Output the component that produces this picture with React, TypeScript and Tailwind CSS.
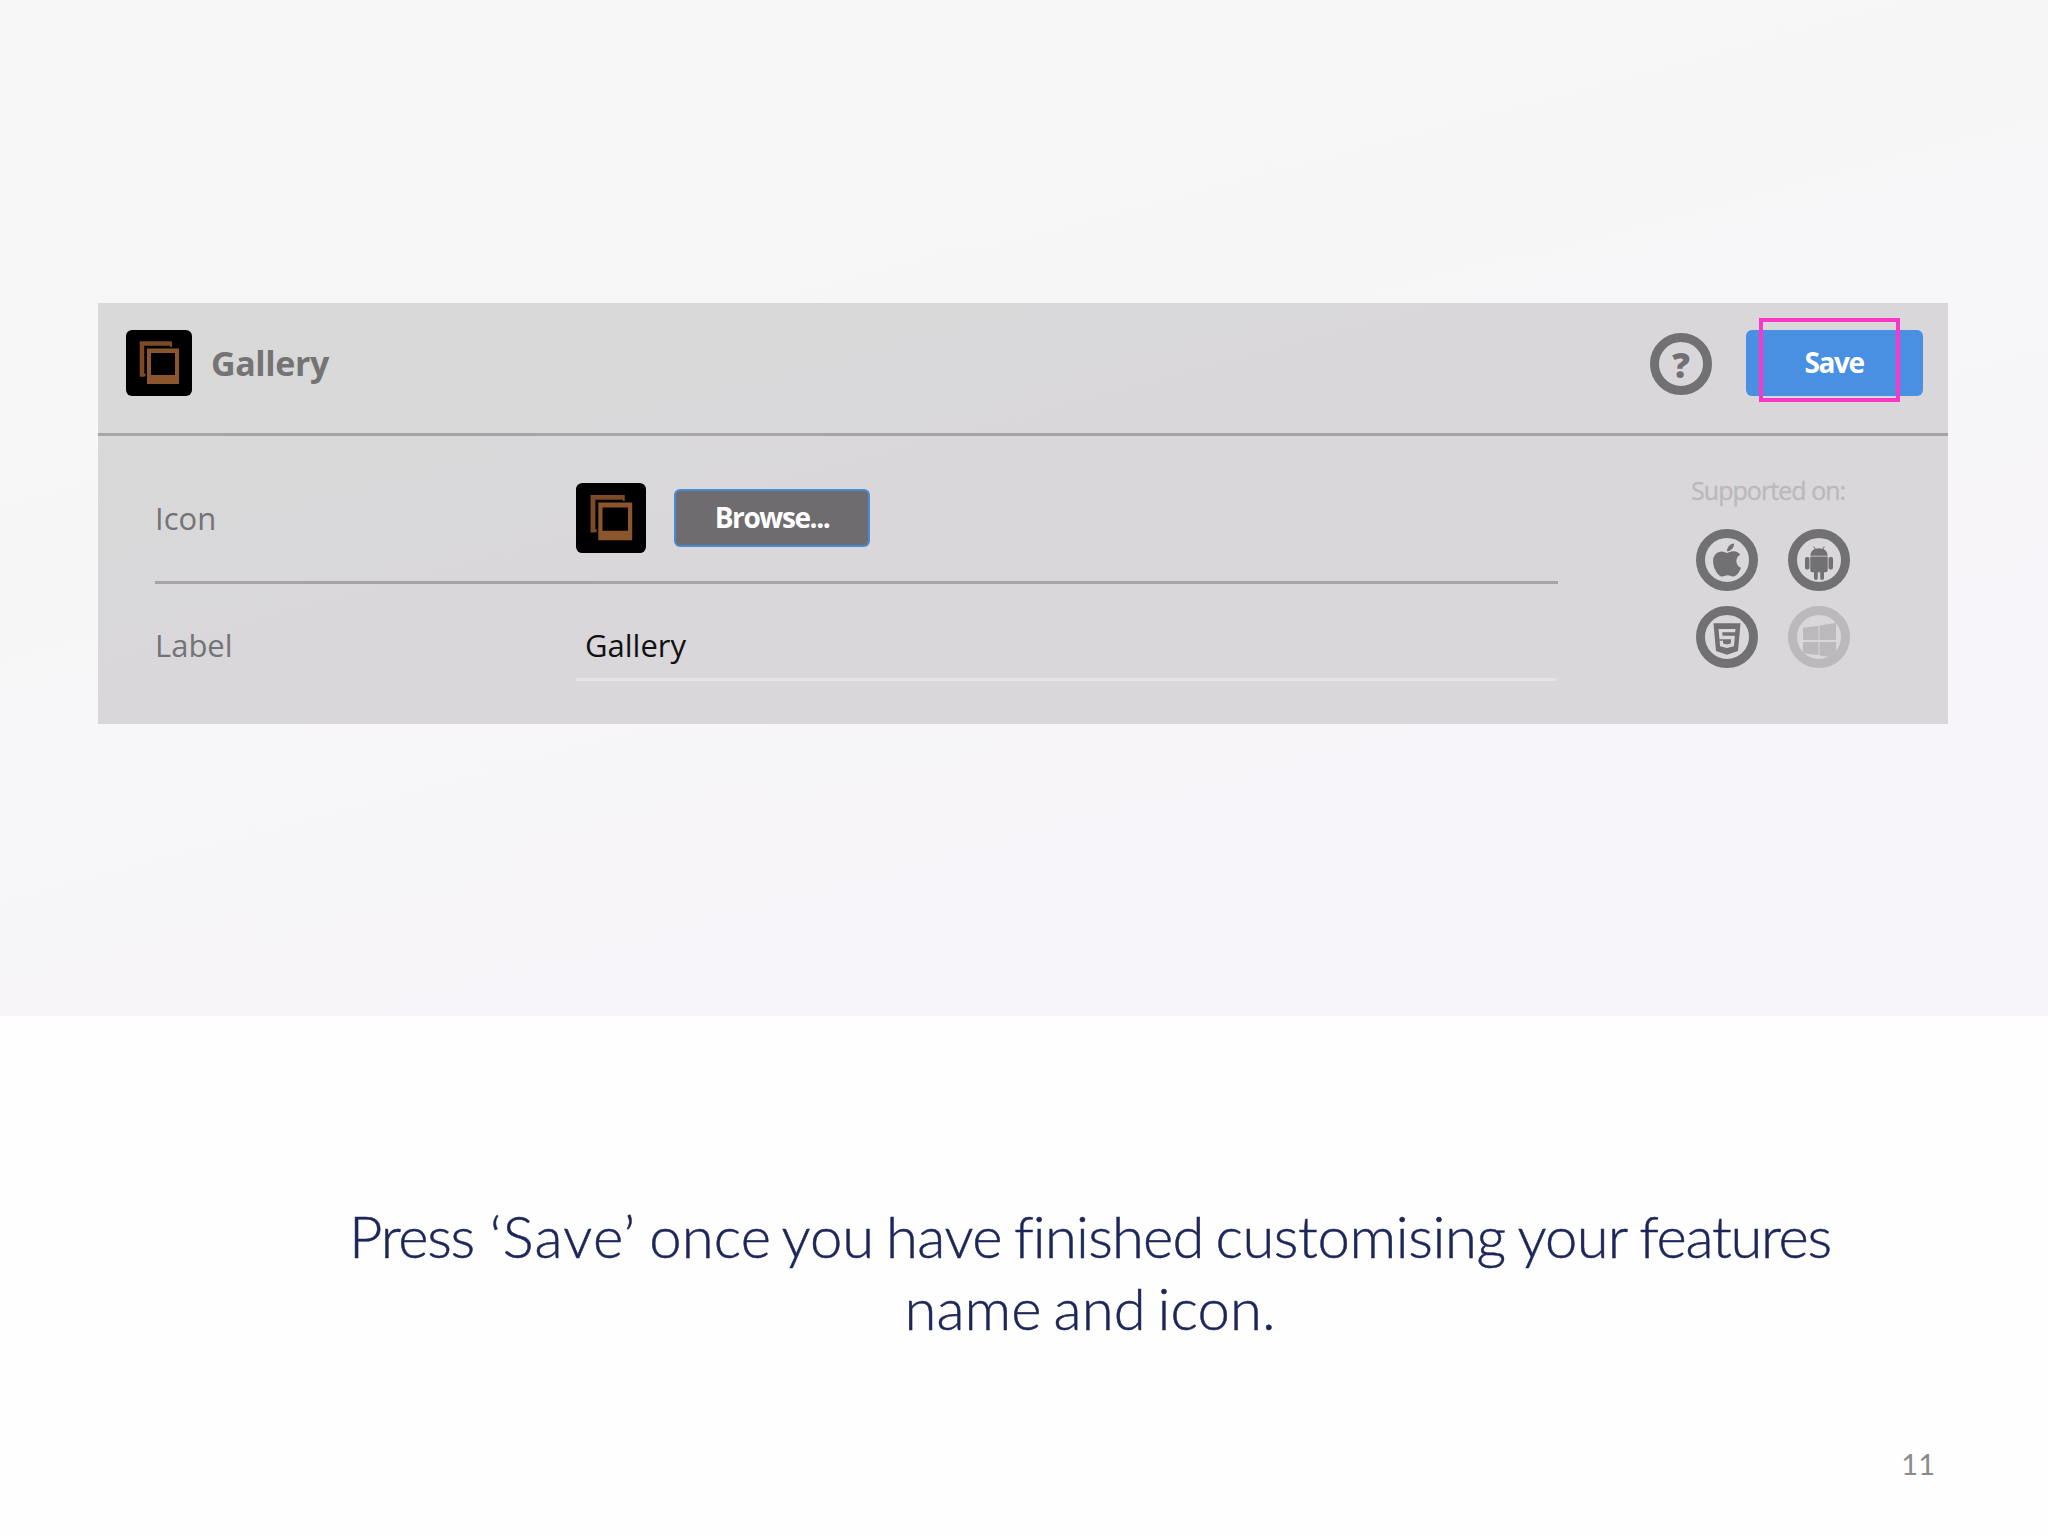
import type { ReactNode } from 'react';
import { FaApple, FaHtml5 } from 'react-icons/fa';

function GalleryIcon({ className }: { className: string }) {
  return (
    <svg viewBox="0 0 66 66" className={className} aria-hidden="true">
      <rect width="66" height="66" rx="6" fill="#000" />
      <path d="M16 46.5V13.5H45" fill="none" stroke="#7c4a26" strokeWidth="4.5" />
      <path d="M14 45H20" stroke="#7c4a26" strokeWidth="3" />
      <path d="M45 11.5V18" stroke="#7c4a26" strokeWidth="2" />
      <rect x="19.5" y="17" width="35" height="38" fill="#000" />
      <path fillRule="evenodd" d="M21 18.5H53V54H21ZM25 23V45H49V23Z" fill="#8b552e" />
    </svg>
  );
}

function Ring({ children, faded }: { children: ReactNode; faded?: boolean }) {
  return (
    <div
      className={
        faded
          ? 'flex h-[62px] w-[62px] items-center justify-center rounded-full border-[9px] border-[#bbb9bc] text-[#bbb9bc]'
          : 'flex h-[62px] w-[62px] items-center justify-center rounded-full border-[9px] border-[#717073] text-[#717073]'
      }
    >
      {children}
    </div>
  );
}

function AndroidIcon() {
  return (
    <svg viewBox="0 0 30 34" className="mt-[5px] h-[34px] w-[30px] shrink-0" fill="currentColor" aria-hidden="true">
      <path d="M6.3 9.7C6.5 6.5 8.2 4.2 10.7 3L9.2 .7l.8-.5 1.6 2.5a11 11 0 0 1 6.8 0L20 .2l.8.5L19.3 3c2.5 1.2 4.2 3.5 4.4 6.7Z" />
      <path d="M6.3 10.4H23.7V24.5a1.8 1.8 0 0 1-1.8 1.8H20V32a1.8 1.8 0 0 1-3.8 0V26.3H13.8V32A1.8 1.8 0 0 1 10 32V26.3H8.1a1.8 1.8 0 0 1-1.8-1.8Z" />
      <rect x="1" y="11" width="4.5" height="12.500" rx="1.800" />
      <rect x="24.5" y="11" width="4.5" height="12.500" rx="1.800" />
    </svg>
  );
}

function WindowsIcon() {
  return (
    <svg viewBox="0 0 36 36" className="mt-[6px] h-[35px] w-[35px] shrink-0" fill="currentColor" aria-hidden="true">
      <path d="M1 5L17 2.8V17.5H1Z M18 2.6L35 0V17.5H18Z M1 19.500H17V33L1 31Z M18 19.5H35V36L18 33.3Z" />
    </svg>
  );
}

const captionWords = [
  { text: 'Press', style: 'mr-[4px] tracking-[-1.3px]' },
  { text: '‘Save’', style: 'mr-[1px] tracking-[1.2px]' },
  { text: 'once', style: 'tracking-[0.2px]' },
  { text: 'you', style: 'tracking-normal' },
  { text: 'have', style: 'tracking-[-0.5px]' },
  { text: 'finished', style: 'tracking-[-0.8px]' },
  { text: 'customising', style: 'tracking-[-0.4px]' },
  { text: 'your', style: 'tracking-[-0.8px]' },
  { text: 'features', style: 'tracking-[-1.3px]' },
];

export default function App() {
  return (
    <div className="flex h-[1536px] w-[2048px] flex-col overflow-hidden bg-[#fefefe] font-['Open_Sans',sans-serif]">
      <section className="h-[1016px] bg-linear-[165deg] from-[#f7f7f7] from-25% to-[#f7f5f9] to-75% pt-[303px] pl-[97.5px]">
        <div className="h-[421px] w-[1850px] bg-linear-[165deg] from-[#d9d9d9] from-10% to-[#d9d7da] to-45%">
          <header className="flex h-[133px] items-start border-b-[3px] border-[#a6a4a7] pt-[26.5px] pl-[28px]">
            <GalleryIcon className="h-[66px] w-[66px]" />
            <h1 className="ml-[19.5px] text-[34px] leading-[67px] font-bold tracking-[-0.4px] text-[#747474]">Gallery</h1>
            <div className="ml-auto flex items-start">
              <div className="mt-[3px]">
                <Ring>
                  <span className="ml-[1px] pt-[2px] text-[35px] leading-[44px] font-extrabold">?</span>
                </Ring>
              </div>
              <div className="relative mr-[25px] ml-[34px]">
                <button className="block h-[66px] w-[177px] rounded-[6px] bg-[#4a90e2] pb-[2px] text-[28px] leading-[64px] font-bold tracking-[-1.4px] text-white">
                  Save
                </button>
                <div className="absolute -top-[11.5px] left-[13px] h-[84px] w-[141px] border-4 border-[#fb37c8]" />
              </div>
            </div>
          </header>

          <div className="flex">
            <div className="ml-[57.5px] w-[1403px]">
              <div className="flex h-[148px] items-center border-b-[3px] border-[#a6a4a7] pt-[19px]">
                <span className="w-[421px] text-[31px] leading-[40px] text-[#747376]">Icon</span>
                <GalleryIcon className="h-[70px] w-[70px]" />
                <button className="ml-[28px] h-[58px] w-[196px] rounded-[6px] border-2 border-[#4a8ad4] bg-[#6e6c6f] pb-[2px] text-[28px] leading-[52px] font-bold tracking-[-1.4px] text-white">
                  Browse...
                </button>
              </div>
              <div className="flex h-[97px]">
                <span className="w-[421px] pt-[41px] text-[31px] leading-[40px] text-[#747376]">Label</span>
                <div className="w-[980px] border-b-[3px] border-[#e5e3e6] pt-[41px] pl-[9px] text-[31px] leading-[40px] text-[#111]">
                  Gallery
                </div>
              </div>
            </div>
            <aside className="ml-[133px] pt-[34px]">
              <p className="text-[25px] leading-[40px] tracking-[-0.95px] text-[#bbb9bc] [-webkit-text-stroke:0.4px_#bbb9bc]">
                Supported on:
              </p>
              <div className="mt-[19px] ml-[5px] grid w-[154px] grid-cols-2 gap-x-[30px] gap-y-[15px]">
                <Ring>
                  <FaApple className="mb-[1px] h-[38px] w-[38px] shrink-0" />
                </Ring>
                <Ring>
                  <AndroidIcon />
                </Ring>
                <Ring>
                  <FaHtml5 className="mt-[4px] h-[36px] w-[36px] shrink-0" />
                </Ring>
                <Ring faded>
                  <WindowsIcon />
                </Ring>
              </div>
            </aside>
          </div>
        </div>
      </section>

      <section className="flex flex-1 flex-col pt-[184px] font-['Lato',sans-serif]">
        <p className="ml-[132px] text-center text-[58px] leading-[72px] font-light text-[#1d2658] [-webkit-text-stroke:0.5px_#1d2658] [word-spacing:-4px]">
          <span className="block whitespace-nowrap">
            {captionWords.map((word) => (
              <span key={word.text}>
                <span className={word.style}>{word.text}</span>{' '}
              </span>
            ))}
          </span>
          <span className="block tracking-[0.1px]">name and icon.</span>
        </p>
        <span className="mt-auto mr-[113px] mb-[52px] self-end text-[29px] leading-[40px] text-[#8b8b8b]">11</span>
      </section>
    </div>
  );
}
